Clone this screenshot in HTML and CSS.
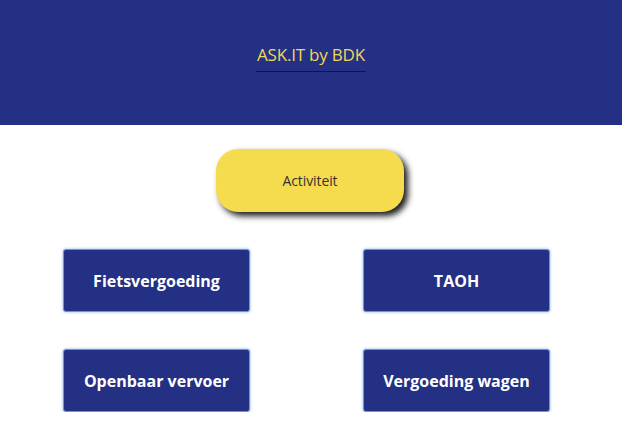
FILE: index.html
```html
<!DOCTYPE html>
<html>
<head>
<meta charset="utf-8">
<link rel="stylesheet" href="styles.css">
</head>
<body>
<header class="header">
  <h1 class="title">ASK.IT by BDK</h1>
</header>
<main class="main">
  <div class="activity-row">
    <button class="activity">Activiteit</button>
  </div>
  <div class="grid">
    <button class="tile">Fietsvergoeding</button>
    <button class="tile">TAOH</button>
    <button class="tile">Openbaar vervoer</button>
    <button class="tile">Vergoeding wagen</button>
  </div>
</main>
</body>
</html>
```
FILE: styles.css
```css
html, body {
  margin: 0;
  padding: 0;
  background: #ffffff;
  font-family: "Open Sans", "Noto Sans", "Liberation Sans", sans-serif;
}
.header {
  height: 125px;
  background: #233083;
  display: flex;
  justify-content: center;
  padding-top: 44px;
  box-sizing: border-box;
}
.title {
  margin: 0;
  height: 27px;
  font-size: 17px;
  font-weight: 400;
  color: #f3d659;
  line-height: 22px;
  border-bottom: 1px solid #10163f;
  padding: 0 1px;
  letter-spacing: -0.2px;
}
.main {
  padding-top: 24px;
}
.activity-row {
  display: flex;
  justify-content: center;
  padding-right: 2px;
}
.activity {
  width: 188px;
  height: 63px;
  border: none;
  border-radius: 22px;
  background: #f5dc4e;
  color: #333333;
  font-family: inherit;
  font-size: 14px;
  box-shadow: 4px 4px 6px rgba(0, 0, 0, 0.9);
  letter-spacing: -0.1px;
}
.grid {
  display: grid;
  grid-template-columns: 187px 187px;
  column-gap: 113px;
  row-gap: 37px;
  padding-left: 63px;
  padding-top: 37px;
}
.tile {
  height: 63px;
  background: #233083;
  border: 1px solid #5a9aec;
  border-radius: 3px;
  box-shadow: 0 0 3px rgba(90, 150, 235, 0.7);
  color: #ffffff;
  font-family: inherit;
  font-size: 16px;
  font-weight: 700;
  letter-spacing: 0;
}
```
